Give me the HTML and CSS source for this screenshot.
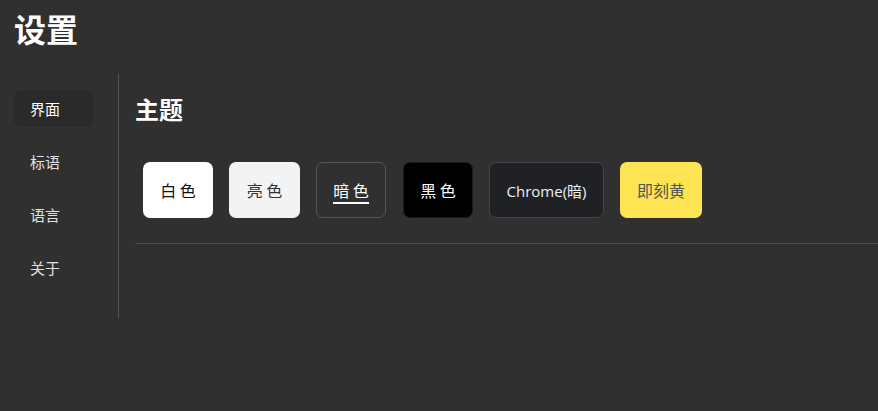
FILE: index.html
```html
<!DOCTYPE html>
<html lang="zh">
<head>
<meta charset="utf-8">
<title>设置</title>
<link rel="stylesheet" href="styles.css">
</head>
<body>
<header class="header"><h1 class="title">设置</h1></header>
<main class="main">
  <nav class="sidebar">
    <a class="nav-item active">界面</a>
    <a class="nav-item">标语</a>
    <a class="nav-item">语言</a>
    <a class="nav-item">关于</a>
  </nav>
  <section class="content">
    <h2 class="section-title">主题</h2>
    <div class="themes">
      <button class="theme t-white">白 色</button>
      <button class="theme t-light">亮 色</button>
      <button class="theme t-dark"><span class="selected">暗 色</span></button>
      <button class="theme t-black">黑 色</button>
      <button class="theme t-chrome">Chrome(暗)</button>
      <button class="theme t-yellow">即刻黄</button>
    </div>
    <hr class="divider">
  </section>
</main>
</body>
</html>
```
FILE: styles.css
```css
* { box-sizing: border-box; }
html, body { margin: 0; }
body {
  background: #303030;
  width: 878px;
  height: 411px;
  overflow: hidden;
  font-family: "Noto Sans CJK SC", "Noto Sans", sans-serif;
  color: #fff;
}
.header { padding: 6px 0 0 14px; height: 74px; }
.title { margin: 0; font-size: 32px; line-height: 44px; font-weight: 700; color: #fff; }
.main { display: flex; }
.sidebar {
  width: 119px;
  height: 244px;
  border-right: 1px solid #555;
  padding: 16px 0 0 14px;
  display: flex;
  flex-direction: column;
  gap: 16px;
}
.nav-item {
  width: 80px;
  height: 37px;
  border-radius: 8px;
  padding-left: 16px;
  font-size: 15px;
  line-height: 37px;
  color: #e0e0e0;
}
.nav-item.active { background: #2a2a2a; color: #fff; }
.content { flex: 1; padding: 19px 0 0 16px; }
.section-title { margin: 0; font-size: 24px; line-height: 32px; font-weight: 700; color: #fff; }
.themes { display: flex; gap: 16px; padding: 37px 0 0 8px; }
.theme {
  height: 56px;
  padding: 0;
  border-radius: 7px;
  border: 1px solid transparent;
  font-family: "Noto Sans CJK SC", "Noto Sans", sans-serif;
  font-size: 16px;
  cursor: pointer;
}
.t-white { background: #fff; color: #111; width: 70px; }
.t-light { background: #f3f3f3; color: #333; width: 71px; }
.t-dark { background: #303030; color: #fff; border-color: #555; width: 70px; }
.t-black { background: #000; color: #fff; border-color: #1a1a1a; width: 70px; margin-left: 1px; }
.t-chrome { background: #202124; color: #f0f0f0; border-color: #444; width: 115px; font-family: "Open Sans", "Noto Sans CJK SC", sans-serif; font-size: 15px; }
.t-yellow { background: #fde452; color: #555; width: 82px; }
.selected { display: inline-block; border-bottom: 2px solid #fff; line-height: 20px; padding-bottom: 2px; margin-top: 4px; }
.divider { border: 0; border-top: 1px solid #4a4a4a; margin: 25px 0 0 0; }
```
